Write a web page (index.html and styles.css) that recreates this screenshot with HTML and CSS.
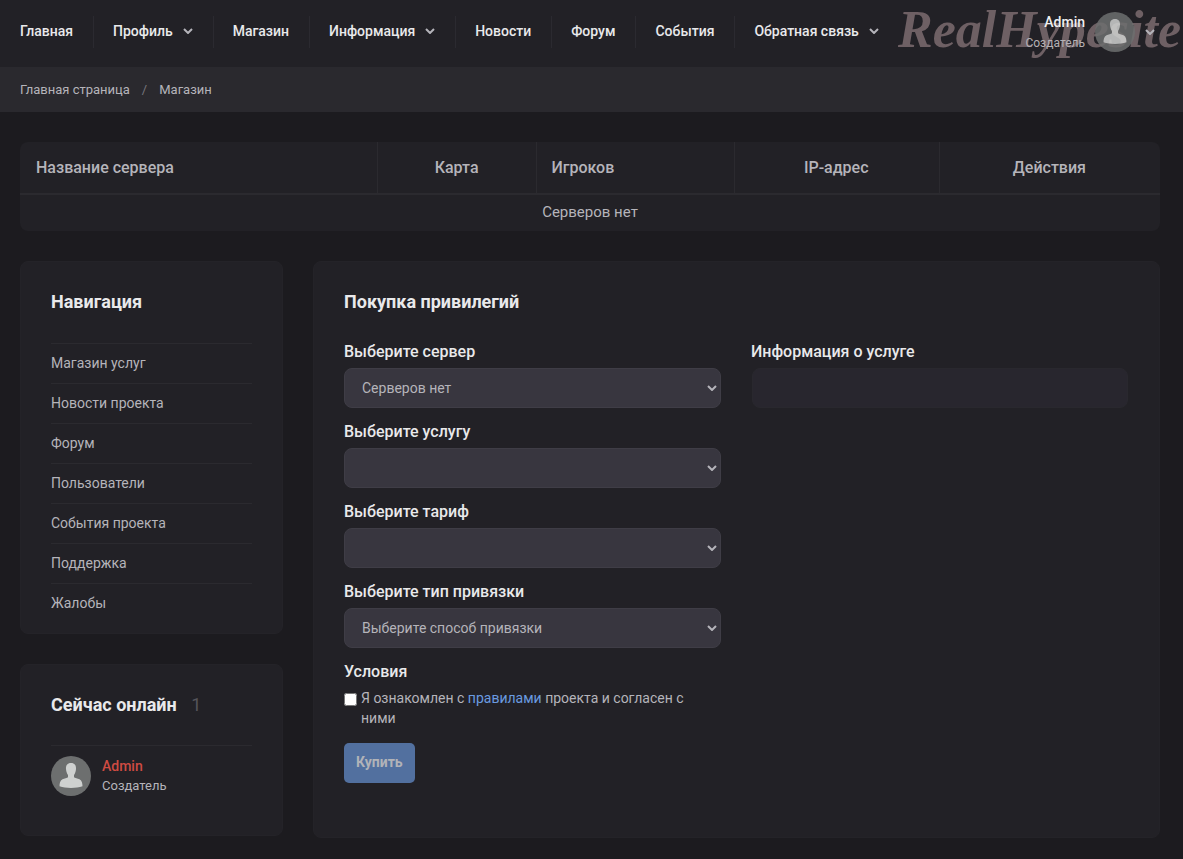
FILE: index.html
```html
<!DOCTYPE html>
<html lang="ru">
<head>
<meta charset="utf-8">
<meta name="viewport" content="width=device-width, initial-scale=1">
<title>Магазин</title>
<link rel="stylesheet" href="styles.css">
</head>
<body>
<svg class="sprite" aria-hidden="true">
  <symbol id="chevron" viewBox="0 0 10 6"><path d="M1 1l4 4 4-4" fill="none" stroke="currentColor" stroke-width="2"/></symbol>
  <symbol id="person" viewBox="0 0 40 40">
    <circle cx="20" cy="20" r="20" fill="#6d6f6f"/>
    <path d="M20 7c-3.600 0-5.400 2.600-5 6 .2 2.700 1.100 4.800 2 6v2.300c-.8 1-3.700 1.200-5.500 2C9 24.500 8.500 27.500 8.500 30.300c3.200 1.200 7.300 1.700 11.500 1.700s8.300-.5 11.500-1.700c0-2.800-.5-5.800-3-7-1.800-.8-4.700-1-5.500-2V19c.9-1.200 1.800-3.300 2-6 .4-3.400-1.400-6-5-6z" fill="#cfd1d0"/>
  </symbol>
</svg>

<header class="header">
  <nav class="nav">
    <a class="nav-link" href="#">Главная</a>
    <a class="nav-link" href="#">Профиль <svg class="chevron"><use href="#chevron"/></svg></a>
    <a class="nav-link" href="#">Магазин</a>
    <a class="nav-link" href="#">Информация <svg class="chevron"><use href="#chevron"/></svg></a>
    <a class="nav-link" href="#">Новости</a>
    <a class="nav-link" href="#">Форум</a>
    <a class="nav-link" href="#">События</a>
    <a class="nav-link" href="#">Обратная связь <svg class="chevron"><use href="#chevron"/></svg></a>
  </nav>
  <a class="logo" href="#">RealHypesite</a>
  <button class="account" type="button">
    <span class="account-text"><span class="account-name">Admin</span><span class="account-role">Создатель</span></span>
    <svg class="avatar account-avatar"><use href="#person"/></svg>
    <svg class="chevron"><use href="#chevron"/></svg>
  </button>
</header>

<nav class="breadcrumbs">
  <a href="#">Главная страница</a><span class="slash">/</span><span>Магазин</span>
</nav>

<div class="page">
  <table class="servers">
    <thead>
      <tr><th class="col-name">Название сервера</th><th class="col-map">Карта</th><th class="col-players">Игроков</th><th class="col-ip">IP-адрес</th><th>Действия</th></tr>
    </thead>
    <tbody><tr><td colspan="5">Серверов нет</td></tr></tbody>
  </table>

  <div class="columns">
    <aside class="sidebar">
      <section class="card card-menu">
        <h2 class="title">Навигация</h2>
        <ul class="menu">
          <li><a href="#">Магазин услуг</a></li>
          <li><a href="#">Новости проекта</a></li>
          <li><a href="#">Форум</a></li>
          <li><a href="#">Пользователи</a></li>
          <li><a href="#">События проекта</a></li>
          <li><a href="#">Поддержка</a></li>
          <li><a href="#">Жалобы</a></li>
        </ul>
      </section>
      <section class="card card-online">
        <h2 class="title">Сейчас онлайн <span class="count">1</span></h2>
        <div class="user">
          <svg class="avatar"><use href="#person"/></svg>
          <div class="user-text"><a class="user-name" href="#">Admin</a><span class="user-role">Создатель</span></div>
        </div>
      </section>
    </aside>

    <main class="card shop">
      <h2 class="title">Покупка привилегий</h2>
      <div class="shop-columns">
        <form>
          <label class="label" for="server">Выберите сервер</label>
          <div class="picker"><select id="server"><option>Серверов нет</option></select><svg class="chevron"><use href="#chevron"/></svg></div>
          <label class="label" for="service">Выберите услугу</label>
          <div class="picker"><select id="service"></select><svg class="chevron"><use href="#chevron"/></svg></div>
          <label class="label" for="tariff">Выберите тариф</label>
          <div class="picker"><select id="tariff"></select><svg class="chevron"><use href="#chevron"/></svg></div>
          <label class="label" for="binding">Выберите тип привязки</label>
          <div class="picker"><select id="binding"><option>Выберите способ привязки</option></select><svg class="chevron"><use href="#chevron"/></svg></div>
          <h3 class="label">Условия</h3>
          <div class="terms">
            <input type="checkbox" id="agree">
            <label for="agree">Я ознакомлен с <a href="#">правилами</a> проекта и согласен с ними</label>
          </div>
          <button class="buy" type="button">Купить</button>
        </form>
        <section>
          <h3 class="label">Информация о услуге</h3>
          <div class="info"></div>
        </section>
      </div>
    </main>
  </div>
</div>
</body>
</html>
```
FILE: styles.css
```css
* { box-sizing: border-box; }
body {
  margin: 0;
  background: #1c1b1f;
  color: #b5b4ba;
  font: 14px/20px Roboto, sans-serif;
  overflow-x: hidden;
}
a { color: inherit; text-decoration: none; }
h2, h3, ul { margin: 0; padding: 0; }
button, select { font: inherit; }
.sprite { display: none; }
.chevron { width: 10px; height: 6px; flex: none; color: #b5b4ba; }
.avatar { width: 40px; height: 40px; flex: none; }

.header {
  position: relative;
  display: flex;
  justify-content: space-between;
  align-items: center;
  height: 67px;
  padding: 0 28px 4px 0;
  background: #222126;
  overflow: hidden;
}
.nav { display: flex; }
.nav-link {
  display: flex;
  align-items: center;
  gap: 10px;
  height: 32px;
  padding: 0 20px 2px;
  color: #e9e9eb;
  font-weight: 500;
  white-space: nowrap;
}
.nav-link + .nav-link { padding-left: 19px; border-left: 1px solid #2b2a30; }
.logo {
  position: absolute;
  top: 0;
  left: 898px;
  color: #6e6064;
  font: italic bold 52px/60px "Liberation Serif", serif;
}
.account {
  position: relative;
  display: flex;
  align-items: center;
  gap: 10px;
  padding: 0;
  border: 0;
  background: none;
}
.account-text { display: grid; text-align: right; }
.account-name { color: #f0eff0; font-size: 14px; line-height: 22px; font-weight: 500; }
.account-role { color: #b5b0b4; font-size: 12px; }
.account-avatar { opacity: .85; }

.breadcrumbs {
  display: flex;
  align-items: center;
  height: 45px;
  padding: 0 20px;
  background: #2a292e;
  font-size: 13px;
}
.slash { margin: 0 12px; color: #77767c; }

.page { padding: 30px 23px 21px 20px; }
.servers {
  width: 100%;
  table-layout: fixed;
  border-spacing: 0;
  background: #222126;
  border-radius: 8px;
}
.servers th {
  height: 53px;
  padding: 0 15px;
  border-bottom: 2px solid #2b2a2f;
  font-size: 16px;
  font-weight: 500;
}
.servers th + th { padding-left: 14px; border-left: 1px solid #2b2a2f; }
.servers td { height: 36px; padding: 0 0 2px; font-size: 15px; text-align: center; }
.servers .col-name { width: 31.3%; padding-left: 16px; text-align: left; }
.col-map { width: 14%; }
.servers .col-players { width: 17.3%; text-align: left; }
.col-ip { width: 18%; }

.columns { display: grid; grid-template-columns: 263px 1fr; gap: 30px; margin-top: 30px; }
.sidebar { display: flex; flex-direction: column; gap: 30px; }
.card { padding: 30px; border: 1px solid #242328; border-radius: 8px; background: #222126; }
.title { color: #e9e9eb; font-size: 18px; line-height: 20px; font-weight: 700; }
.card-menu { padding-bottom: 10px; }
.menu { margin-top: 31px; list-style: none; }
.menu li { height: 40px; border-top: 1px solid #2b2a2f; }
.menu a { display: block; line-height: 39px; }
.card-online { min-height: 172px; }
.count { margin-left: 10px; color: #55545a; font-weight: 400; }
.user { display: flex; gap: 11px; margin-top: 30px; padding-top: 10px; border-top: 1px solid #2b2a2f; }
.user-text { display: grid; align-content: start; }
.user-name { color: #cf4b42; font-weight: 500; }
.user-role { font-size: 13px; }

.shop { min-height: 577px; padding-right: 31px; }
.shop-columns { display: grid; grid-template-columns: 1fr 1fr; gap: 30px; margin-top: 28px; }
.label { display: block; margin-bottom: 4px; color: #e9e9eb; font-size: 16px; line-height: 24px; font-weight: 500; }
.picker { display: grid; align-items: center; margin-bottom: 12px; }
.picker select, .picker .chevron { grid-area: 1 / 1; }
.picker select {
  appearance: none;
  width: 100%;
  height: 40px;
  padding: 0 17px;
  border: 1px solid #3f3d46;
  border-radius: 8px;
  background: #38363f;
  color: #b5b4ba;
}
.picker .chevron { justify-self: end; margin-right: 4px; pointer-events: none; }
.terms { display: flex; gap: 4px; }
.terms input { flex: none; width: 13px; height: 13px; margin: 5px 0 0; }
.terms a { color: #6a9be0; }
.buy {
  height: 40px;
  margin-top: 15px;
  padding: 0 12px 2px;
  border: 0;
  border-radius: 5px;
  background: #52709f;
  color: #b1b3b8;
  font-weight: 700;
}
.info { min-height: 40px; margin-left: 1px; border: 1px solid #29282e; border-radius: 8px; background: #28262e; }
```
